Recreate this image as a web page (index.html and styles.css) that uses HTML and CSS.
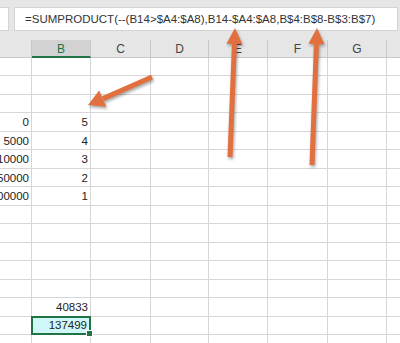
FILE: index.html
```html
<!DOCTYPE html>
<html>

<head>
    <meta charset="UTF-8">
    <title>SUMPRODUCT</title>
    <link rel="stylesheet" href="styles.css">
</head>

<body>
    <div class="topbar">
        <div class="namebox"></div>
        <div class="formula">=SUMPRODUCT(--(B14&gt;$A4:$A8),B14-$A4:$A8,B$4:B$8-B$3:B$7)</div>
    </div>

    <div class="sheet">
        <div class="head"></div>
        <div class="head sel">B</div>
        <div class="head">C</div>
        <div class="head">D</div>
        <div class="head">E</div>
        <div class="head">F</div>
        <div class="head">G</div>
        <div class="head"></div>

        <div class="cell"></div><div class="cell"></div><div class="cell"></div><div class="cell"></div><div class="cell"></div><div class="cell"></div><div class="cell"></div><div class="cell"></div>
        <div class="cell"></div><div class="cell"></div><div class="cell"></div><div class="cell"></div><div class="cell"></div><div class="cell"></div><div class="cell"></div><div class="cell"></div>
        <div class="cell"></div><div class="cell"></div><div class="cell"></div><div class="cell"></div><div class="cell"></div><div class="cell"></div><div class="cell"></div><div class="cell"></div>
        <div class="cell">0</div><div class="cell">5</div><div class="cell"></div><div class="cell"></div><div class="cell"></div><div class="cell"></div><div class="cell"></div><div class="cell"></div>
        <div class="cell">5000</div><div class="cell">4</div><div class="cell"></div><div class="cell"></div><div class="cell"></div><div class="cell"></div><div class="cell"></div><div class="cell"></div>
        <div class="cell">10000</div><div class="cell">3</div><div class="cell"></div><div class="cell"></div><div class="cell"></div><div class="cell"></div><div class="cell"></div><div class="cell"></div>
        <div class="cell">50000</div><div class="cell">2</div><div class="cell"></div><div class="cell"></div><div class="cell"></div><div class="cell"></div><div class="cell"></div><div class="cell"></div>
        <div class="cell">100000</div><div class="cell">1</div><div class="cell"></div><div class="cell"></div><div class="cell"></div><div class="cell"></div><div class="cell"></div><div class="cell"></div>
        <div class="cell"></div><div class="cell"></div><div class="cell"></div><div class="cell"></div><div class="cell"></div><div class="cell"></div><div class="cell"></div><div class="cell"></div>
        <div class="cell"></div><div class="cell"></div><div class="cell"></div><div class="cell"></div><div class="cell"></div><div class="cell"></div><div class="cell"></div><div class="cell"></div>
        <div class="cell"></div><div class="cell"></div><div class="cell"></div><div class="cell"></div><div class="cell"></div><div class="cell"></div><div class="cell"></div><div class="cell"></div>
        <div class="cell"></div><div class="cell"></div><div class="cell"></div><div class="cell"></div><div class="cell"></div><div class="cell"></div><div class="cell"></div><div class="cell"></div>
        <div class="cell"></div><div class="cell"></div><div class="cell"></div><div class="cell"></div><div class="cell"></div><div class="cell"></div><div class="cell"></div><div class="cell"></div>
        <div class="cell"></div><div class="cell">40833</div><div class="cell"></div><div class="cell"></div><div class="cell"></div><div class="cell"></div><div class="cell"></div><div class="cell"></div>
        <div class="cell"></div><div class="cell active">137499<span class="handle"></span></div><div class="cell"></div><div class="cell"></div><div class="cell"></div><div class="cell"></div><div class="cell"></div><div class="cell"></div>
        <div class="cell"></div><div class="cell"></div><div class="cell"></div><div class="cell"></div><div class="cell"></div><div class="cell"></div><div class="cell"></div><div class="cell"></div>
    </div>

    <!-- callout arrows drawn over the sheet -->
    <svg class="arrows" width="400" height="343" viewBox="0 0 400 343">
        <line x1="152" y1="77" x2="103" y2="98.6" />
        <polygon points="88,105 106.3,106.8 99.1,90.4" />
        <line x1="230" y1="157" x2="234.4" y2="44" />
        <polygon points="235,28 242.4,44.3 226.4,43.7" />
        <line x1="312" y1="165" x2="316.4" y2="44" />
        <polygon points="317,28 324.4,44.3 308.4,43.7" />
    </svg>
</body>

</html>
```

FILE: styles.css
```css
body {
    margin: 0;
    width: 400px;
    height: 343px;
    overflow: hidden;
    background-color: #FFFFFF;
    font-family: "Liberation Sans", Arial, sans-serif;
    position: relative;
}

.topbar {
    height: 40px;
    background-color: #e6e6e6;
    padding-top: 7px;
    box-sizing: border-box;
    display: flex;
    gap: 5px;
}

.namebox {
    width: 9px;
    height: 24px;
    background-color: #FFFFFF;
    border: 1px solid #d4d4d4;
    border-left: none;
    box-sizing: border-box;
}

.formula {
    flex: 1;
    height: 24px;
    margin-right: 2px;
    background-color: #FFFFFF;
    border: 1px solid #d4d4d4;
    box-sizing: border-box;
    padding-left: 10px;
    font-size: 11.5px;
    line-height: 22px;
    color: #333333;
    white-space: nowrap;
    overflow: hidden;
}

.sheet {
    margin-left: -27px;
    display: grid;
    grid-template-columns: 59px 59px 60px 58px 59px 60px 59px 40px;
    grid-template-rows: 18px;
    grid-auto-rows: 18.47px;
}

.head {
    background-color: #e6e6e6;
    border-right: 1px solid #c8c8c8;
    border-bottom: 1px solid #c8c8c8;
    box-sizing: border-box;
    text-align: center;
    font-size: 12px;
    line-height: 18px;
    color: #444444;
}

.head.sel {
    background-color: #d2d2d2;
    border-bottom: 2px solid #217346;
    color: #217346;
}

.cell {
    border-right: 1px solid #d6d6d6;
    border-bottom: 1px solid #d6d6d6;
    box-sizing: border-box;
    padding-right: 2px;
    text-align: right;
    font-size: 11.5px;
    line-height: 18px;
    color: #222222;
    white-space: nowrap;
    overflow: hidden;
}

.cell.active {
    background-color: #d0f7f7;
    border: 2px solid #217346;
    margin: -1px 0 0 -1px;
    line-height: 15px;
    position: relative;
    overflow: visible;
}

.handle {
    position: absolute;
    right: -4px;
    bottom: -4px;
    width: 5px;
    height: 5px;
    background-color: #217346;
    border: 1px solid #FFFFFF;
}

.arrows {
    position: absolute;
    left: 0;
    top: 0;
    filter: drop-shadow(1px 2px 1.5px rgba(0, 0, 0, 0.35));
}

.arrows line {
    stroke: #e2703f;
    stroke-width: 5;
}

.arrows polygon {
    fill: #e2703f;
}
```
